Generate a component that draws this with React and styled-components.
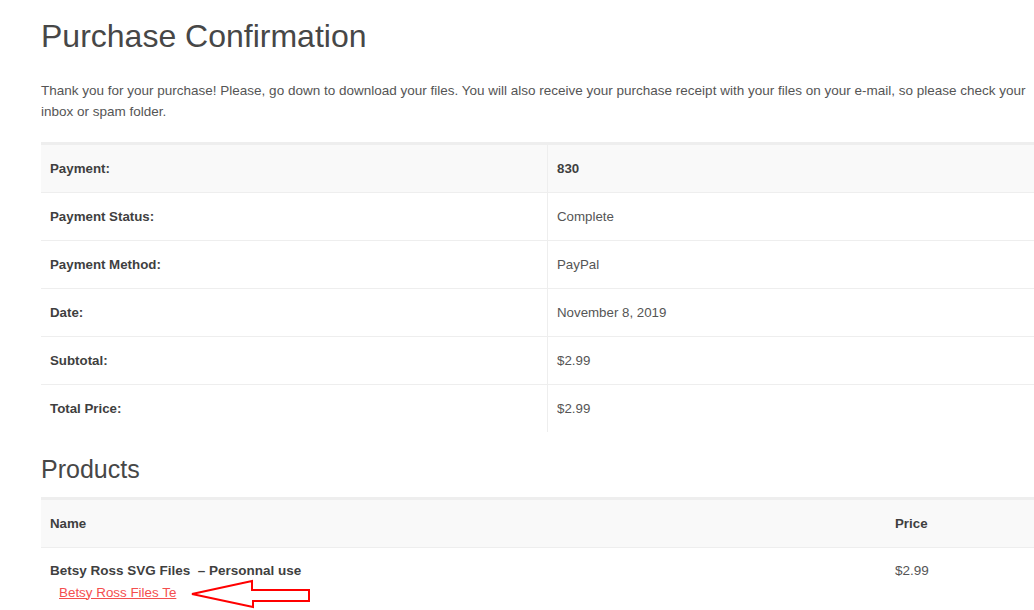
import styled, { createGlobalStyle } from 'styled-components';

const GlobalStyle = createGlobalStyle`
    html, body {
        margin:0;
        padding:0;
        overflow:hidden;
        background:#fff;
    }
    body {
        font-family:"Liberation Sans", Arial, sans-serif;
        color:#555;
    }
`
const Page = styled.div`
    width:1012px;
    padding:19px 0 0 41px;
`
const Title = styled.h1`
    margin:0;
    font-size:32px;
    line-height:35px;
    font-weight:400;
    color:#474747;
`
const Intro = styled.p`
    margin:26px 0 20px;
    font-size:13.5px;
    line-height:21px;
    color:#555;
`
const SubTitle = styled.h2`
    margin:22px 0 13px;
    font-size:25px;
    line-height:30px;
    font-weight:400;
    color:#474747;
`
const Table = styled.table`
    width:100%;
    border-collapse:collapse;
    border-top:3px solid #eee;
`
const Row = styled.tr`
    background:${props => props.$head ? '#f9f9f9' : '#fff'};
    border-bottom:${props => props.$last ? 'none' : '1px solid #eee'};
`
const Cell = styled.td`
    height:47px;
    padding:0 9px;
    font-size:13.3px;
    vertical-align:middle;
    font-weight:${props => props.$bold ? 700 : 400};
    color:${props => props.$bold ? '#3f3f3f' : '#555'};
    width:${props => props.$width || 'auto'};
    border-left:${props => props.$divider ? '1px solid #eee' : 'none'};
`
const ItemCell = styled.td`
    padding:13px 9px 12px;
    vertical-align:top;
    width:${props => props.$width || 'auto'};
`
const ItemName = styled.div`
    font-size:13.5px;
    line-height:20px;
    font-weight:700;
    color:#3f3f3f;
`
const ItemPrice = styled.div`
    font-size:13.5px;
    line-height:20px;
    color:#555;
`
const FileLine = styled.div`
    display:flex;
    align-items:center;
    padding-left:9px;
    height:22px;
`
const FileLink = styled.a`
    font-size:13.4px;
    color:#f44e4e;
    text-decoration:underline;
`
const Arrow = styled.svg`
    margin-left:13px;
    margin-top:4px;
    flex-shrink:0;
`

const details = [
    ['Payment:', '830'],
    ['Payment Status:', 'Complete'],
    ['Payment Method:', 'PayPal'],
    ['Date:', 'November 8, 2019'],
    ['Subtotal:', '$2.99'],
    ['Total Price:', '$2.99'],
]

export default function App()
{
    return(
        <Page>
            <GlobalStyle/>
            <Title>Purchase Confirmation</Title>
            <Intro>
                Thank you for your purchase! Please, go down to download your files. You will also receive your purchase receipt with your files on your e-mail, so please check your inbox or spam folder.
            </Intro>
            <Table>
                <tbody>
                    {details.map(([label, value], i) => (
                        <Row key={label} $head={i === 0} $last={i === details.length - 1}>
                            <Cell $bold $width="488px">{label}</Cell>
                            <Cell $divider $bold={i === 0}>{value}</Cell>
                        </Row>
                    ))}
                </tbody>
            </Table>
            <SubTitle>Products</SubTitle>
            <Table>
                <tbody>
                    <Row $head>
                        <Cell $bold $width="827px">Name</Cell>
                        <Cell $bold>Price</Cell>
                    </Row>
                    <Row $last>
                        <ItemCell $width="827px">
                            <ItemName>Betsy Ross SVG Files &nbsp;– Personnal use</ItemName>
                            <FileLine>
                                <FileLink href="#">Betsy Ross Files Te</FileLink>
                                <Arrow width="124" height="32" viewBox="0 0 124 32">
                                    <polygon
                                        points="3,16 63,3 63,12 120,12 120,23 64,23 64,29"
                                        fill="#fff"
                                        stroke="#f00"
                                        strokeWidth="2"
                                        strokeLinejoin="miter"
                                    />
                                </Arrow>
                            </FileLine>
                        </ItemCell>
                        <ItemCell>
                            <ItemPrice>$2.99</ItemPrice>
                        </ItemCell>
                    </Row>
                </tbody>
            </Table>
        </Page>
    )
}
